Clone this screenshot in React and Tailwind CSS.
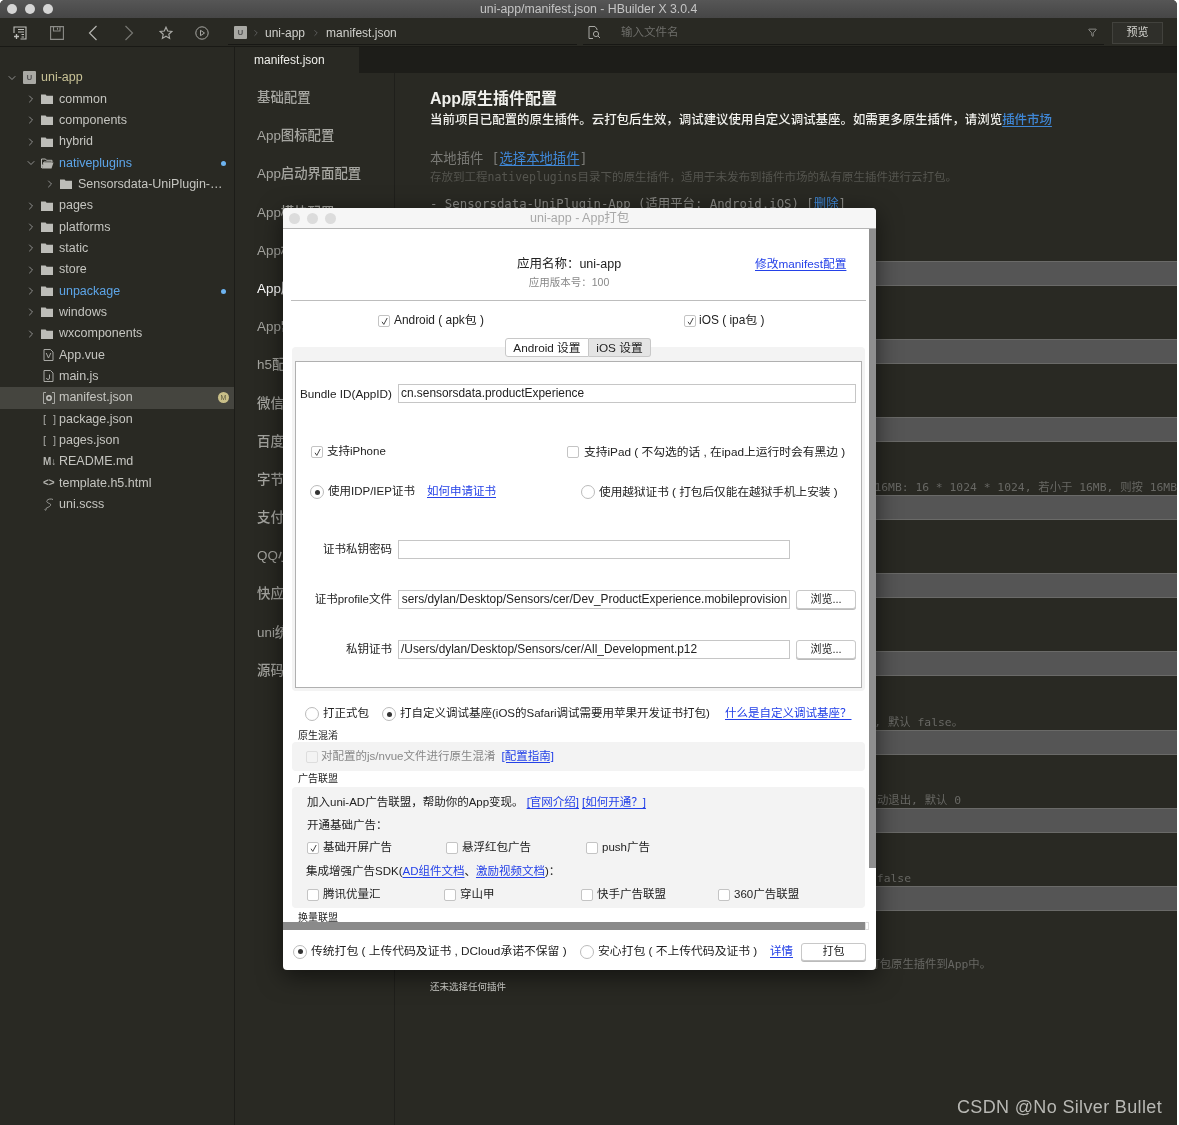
import React from "react";
import { ChevronRight, ChevronDown, Funnel } from "lucide-react";

const Folder = ({ open }) =>
  open ? (
    <svg width="13" height="11" viewBox="0 0 13 11" className="shrink-0">
      <path d="M0.5 1h4l1 1.3h5.5v1.7H3L0.5 10z" fill="none" stroke="#b5b5b0" strokeWidth="1" />
      <path d="M3 4.5h9.5L10.5 10.5H0.8z" fill="#b5b5b0" />
    </svg>
  ) : (
    <svg width="12" height="10" viewBox="0 0 12 10" className="shrink-0">
      <path d="M0 0.5h4.6l1 1.3H12V10H0z" fill="#bdbdb8" />
    </svg>
  );

const Chev = ({ open }) =>
  open ? (
    <ChevronDown size={12} strokeWidth={1.6} className="text-[#aaa] shrink-0" />
  ) : (
    <ChevronRight size={12} strokeWidth={1.6} className="text-[#aaa] shrink-0" />
  );

const FileGlyph = ({ kind }) => {
  if (kind === "vue" || kind === "js")
    return (
      <svg width="11" height="12" viewBox="0 0 11 12" className="shrink-0">
        <path d="M1 0.5h6.5L10 3v8.5H1z" fill="none" stroke="#a8a8a4" />
        {kind === "vue" ? (
          <path d="M3.2 4l2.3 5 2.3-5" fill="none" stroke="#a8a8a4" />
        ) : (
          <path d="M6.5 4.5v3.5a1.5 1.5 0 0 1-3 0" fill="none" stroke="#a8a8a4" />
        )}
      </svg>
    );
  if (kind === "manifest")
    return (
      <svg width="12" height="12" viewBox="0 0 12 12" className="shrink-0">
        <path d="M3 .5H.5v11H3M9 .5h2.5v11H9" fill="none" stroke="#a8a8a4" />
        <circle cx="6" cy="6" r="2.2" fill="none" stroke="#c8c8c4" strokeWidth="1.4" />
      </svg>
    );
  if (kind === "json")
    return <span className="text-[11px] leading-none text-[#a8a8a4] tracking-[2px] w-[12px] whitespace-nowrap shrink-0">[ ]</span>;
  if (kind === "md")
    return <span className="text-[10px] leading-none font-bold text-[#b5b5b0] w-[12px] whitespace-nowrap shrink-0">M↓</span>;
  if (kind === "html")
    return <span className="text-[10px] leading-none font-bold text-[#b5b5b0] w-[12px] whitespace-nowrap shrink-0">&lt;&gt;</span>;
  return (
    <svg width="12" height="13" viewBox="0 0 12 13" className="shrink-0">
      <path d="M10 1.5C8 .5 5 1 4 2.5s1 2.5 2.5 3S8 7.5 6.5 8.5 3 10 2 11.5c-.5.8 1 1 1.5 0" fill="none" stroke="#9a9a96" strokeWidth="1" />
    </svg>
  );
};

const tree = [
  { n: "common" }, { n: "components" }, { n: "hybrid" },
  { n: "nativeplugins", open: true, blue: true, dot: true },
  { n: "Sensorsdata-UniPlugin-…", deep: true },
  { n: "pages" }, { n: "platforms" }, { n: "static" }, { n: "store" },
  { n: "unpackage", blue: true, dot: true },
  { n: "windows" }, { n: "wxcomponents" },
  { n: "App.vue", f: "vue" }, { n: "main.js", f: "js" },
  { n: "manifest.json", f: "manifest", active: true },
  { n: "package.json", f: "json" }, { n: "pages.json", f: "json" },
  { n: "README.md", f: "md" }, { n: "template.h5.html", f: "html" }, { n: "uni.scss", f: "scss" },
];

const navItems = ["基础配置", "App图标配置", "App启动界面配置", "App模块配置", "App权限配置", "App原生插件配置", "App常用其它设置", "h5配置", "微信小程序配置", "百度小程序配置", "字节跳动小程序配置", "支付宝小程序配置", "QQ小程序配置", "快应用配置", "uni统计配置", "源码视图"];

const stripes = [
  { t: "" },
  { t: "" },
  { t: "若大于 16MB: 16 * 1024 * 1024, 若小于 16MB, 则按 16MB", c: "pr-0" },
  { t: "" },
  { t: "" },
  { t: "是否支持分片上传与断点续传, 默认 false。", c: "pr-[214px]" },
  { t: "多少秒后无操作自动退出, 默认 0", c: "pr-[216px]" },
  { t: "是否开启调试日志, 默认 false", c: "pr-[266px]" },
];

const UIcon = () => (
  <span className="w-[13px] h-[13px] bg-[#a9a9a4] rounded-[1px] flex items-center justify-center text-[8px] leading-none text-[#555] font-bold shrink-0">U</span>
);

const Check = ({ on, dim }) => (
  <span className={`w-[12px] h-[12px] rounded-[2px] border flex items-center justify-center shrink-0 ${dim ? "border-[#ddd] bg-[#f3f3f3]" : "border-[#c4c4c4] bg-white"}`}>
    {on && (
      <svg width="9" height="9" viewBox="0 0 9 9">
        <path d="M2 4.8l1.8 2.6L7.2 1" fill="none" stroke="#444" strokeWidth="1" />
      </svg>
    )}
  </span>
);

const Radio = ({ on }) => (
  <span className="w-[14px] h-[14px] rounded-full border border-[#bbb] bg-white flex items-center justify-center shrink-0">
    {on && <span className="w-[5px] h-[5px] rounded-full bg-[#333]" />}
  </span>
);

const A = ({ children, className = "" }) => <span className={`text-[#2441e8] underline underline-offset-2 ${className}`}>{children}</span>;

const Input = ({ w, children }) => (
  <div className={`h-[19px] border border-[#c6c6c6] bg-white flex items-center px-[2px] overflow-hidden whitespace-nowrap text-[11.9px] text-[#222] ${w}`}>{children}</div>
);

const Btn = ({ children, w }) => (
  <div className={`h-[19px] rounded-[3px] border border-[#c8c8c8] bg-white shadow-[0_1px_0_#bbb] flex items-center justify-center text-[11px] text-[#222] ${w}`}>{children}</div>
);

export default function App() {
  return (
    <div className="relative w-[1179px] h-[1125px] overflow-hidden bg-white font-['Liberation_Sans','Noto_Sans_CJK_SC',sans-serif] blur-[0.4px]">
      <div className="w-[1177px] h-[1125px] flex flex-col bg-[#292923] rounded-t-[5px] overflow-hidden">
        {/* title bar */}
        <div className="h-[18px] shrink-0 bg-gradient-to-b from-[#565656] to-[#464646] flex items-center relative">
          <div className="flex gap-[8px] pl-[7px]">
            <span className="w-[10px] h-[10px] rounded-full bg-[#d5d5d5]" />
            <span className="w-[10px] h-[10px] rounded-full bg-[#d5d5d5]" />
            <span className="w-[10px] h-[10px] rounded-full bg-[#d5d5d5]" />
          </div>
          <span className="ml-[427px] text-[12.3px] text-[#c4c4c4] whitespace-nowrap">uni-app/manifest.json - HBuilder X 3.0.4</span>
        </div>

        {/* toolbar */}
        <div className="h-[29px] shrink-0 border-b border-[#191915] flex items-center text-[#a8a8a4]">
          <div className="w-[228px] flex items-center pl-[2px] pt-[1px] shrink-0">
            <div className="w-[36.4px] flex justify-center">
              <svg width="14" height="14" viewBox="0 0 14 14" fill="none" stroke="#c0c0bc" strokeWidth="1.1">
                <path d="M1 7V1h12v12H7.5" />
                <path d="M5 3.5h6M5 6h6M8.5 8.5H11M8.5 11H11" />
                <path d="M3.5 8v5M1 10.5h5" strokeWidth="1.3" />
              </svg>
            </div>
            <div className="w-[36.4px] flex justify-center">
              <svg width="14" height="14" viewBox="0 0 14 14" fill="none" stroke="#8c8c88" strokeWidth="1.1">
                <path d="M.6.6h12.8v12.8H.6zM3.5.6v4.4h6.5V.6M7.5 1.8v2" />
              </svg>
            </div>
            <div className="w-[36.4px] flex justify-center">
              <svg width="10" height="16" viewBox="0 0 10 16" fill="none" stroke="#b5b5b0" strokeWidth="1.2"><path d="M8.5 1L1.5 8l7 7" /></svg>
            </div>
            <div className="w-[36.4px] flex justify-center">
              <svg width="10" height="16" viewBox="0 0 10 16" fill="none" stroke="#777772" strokeWidth="1.2"><path d="M1.5 1l7 7-7 7" /></svg>
            </div>
            <div className="w-[36.4px] flex justify-center">
              <svg width="14" height="14" viewBox="0 0 14 14" fill="none" stroke="#a8a8a4" strokeWidth="1.2"><path d="M7 1.2l1.7 3.8 4.1.5-3 2.8.8 4.1L7 10.3l-3.6 2.1.8-4.1-3-2.8 4.1-.5z" /></svg>
            </div>
            <div className="w-[36.4px] flex justify-center">
              <svg width="14" height="14" viewBox="0 0 14 14" fill="none" stroke="#a8a8a4" strokeWidth="1"><circle cx="7" cy="7" r="6.2" /><path d="M5.5 4.3L9.5 7l-4 2.7z" /></svg>
            </div>
          </div>
          <div className="w-[349px] h-[25px] border-b border-[#171714] flex items-center pl-[6px] pt-[2px] shrink-0 text-[12px] text-[#cfcfcb]">
            <UIcon />
            <ChevronRight size={10} className="ml-[4px] text-[#666]" />
            <span className="ml-[4px]">uni-app</span>
            <ChevronRight size={10} className="ml-[6px] text-[#666]" />
            <span className="ml-[5px]">manifest.json</span>
          </div>
          <div className="ml-[6px] w-[521px] h-[25px] border-b border-[#171714] flex items-center pl-[5px] pt-[2px] shrink-0">
            <svg width="13" height="13" viewBox="0 0 13 13" fill="none" stroke="#a8a8a4">
              <path d="M7 .5H1v12h4M7 .5L9 3v1" />
              <circle cx="8" cy="8" r="2.6" />
              <path d="M10 10l2 2" />
            </svg>
            <span className="ml-[20px] text-[11.5px] text-[#6e6e6a]">输入文件名</span>
            <Funnel size={9} className="ml-auto mr-[7px] text-[#a8a8a4]" />
          </div>
          <div className="ml-[8px] mt-[1px] w-[51px] h-[22px] border border-[#42423d] bg-[#2f2f2a] flex items-center justify-center text-[11px] text-[#d5d5d0]">预览</div>
        </div>

        <div className="flex-1 flex min-h-0">
          {/* sidebar */}
          <div className="w-[235px] shrink-0 border-r border-[#1c1c18] pt-[20px] text-[12.5px] text-[#c5c5c0]">
            <div className="h-[21.35px] flex items-center pl-[6px]">
              <Chev open />
              <span className="ml-[5px]"><UIcon /></span>
              <span className="ml-[5px] text-[#c8c296]">uni-app</span>
            </div>
            {tree.map((r) => (
              <div key={r.n} className={`h-[21.35px] flex items-center whitespace-nowrap ${r.deep ? "pl-[44px]" : "pl-[25px]"} ${r.active ? "bg-[#45453f]" : ""}`}>
                {r.f ? (
                  <span className="w-[12px] shrink-0" />
                ) : (
                  <Chev open={r.open} />
                )}
                <span className={`w-[13px] flex items-center shrink-0 ${r.f ? "ml-[6px]" : "ml-[4px]"}`}>
                  {r.f ? <FileGlyph kind={r.f} /> : <Folder open={r.open} />}
                </span>
                <span className={`${r.f ? "ml-[3px]" : "ml-[5px]"} ${r.blue ? "text-[#5da5e8]" : ""}`}>{r.n}</span>
                {r.dot && <span className="ml-auto mr-[8px] w-[5px] h-[5px] rounded-full bg-[#6db3f0]" />}
                {r.active && <span className="ml-auto mr-[5px] w-[11px] h-[11px] rounded-full bg-[#c9bf88] flex items-center justify-center text-[7px] text-[#5c5840]">M</span>}
              </div>
            ))}
          </div>

          <div className="flex-1 flex flex-col min-w-0">
            {/* tab bar */}
            <div className="h-[26px] shrink-0 flex bg-[#1d1d19]">
              <div className="w-[124px] bg-[#292923] pl-[19px] flex items-center text-[12px] text-[#eeeeea]">manifest.json</div>
            </div>

            <div className="flex-1 flex min-h-0">
              {/* settings nav */}
              <div className="w-[160px] shrink-0 border-r border-[#1f1f1b] pt-[6px] pl-[22px] text-[13.4px] font-medium text-[#a5a5a0]">
                {navItems.map((n) => (
                  <div key={n} className={`h-[38.2px] flex items-center whitespace-nowrap ${n === "App原生插件配置" ? "text-white" : ""}`}>{n}</div>
                ))}
              </div>

              {/* main */}
              <div className="flex-1 min-w-0 pl-[35px] pt-[15px] overflow-hidden">
                <div className="h-[23px] leading-[22px] text-[16px] font-bold text-[#f0f0ec]">App原生插件配置</div>
                <div className="h-[18px] leading-[18px] text-[12.45px] font-medium text-[#f0f0ec] whitespace-nowrap">当前项目已配置的原生插件。云打包后生效，调试建议使用自定义调试基座。如需更多原生插件，请浏览<span className="text-[#3f87d6] underline underline-offset-2">插件市场</span></div>
                <div className="mt-[21px] h-[18px] leading-[18px] text-[13.35px] text-[#7a7a76] whitespace-nowrap font-['DejaVu_Sans_Mono','Noto_Sans_CJK_SC',monospace]">本地插件 [<span className="text-[#3f87d6] underline underline-offset-2">选择本地插件</span>]</div>
                <div className="h-[18px] leading-[18px] text-[11.5px] text-[#55554f] whitespace-nowrap font-['DejaVu_Sans_Mono','Noto_Sans_CJK_SC',monospace]">存放到工程nativeplugins目录下的原生插件，适用于未发布到插件市场的私有原生插件进行云打包。</div>
                <div className="mt-[9px] h-[18px] leading-[18px] text-[12.35px] text-[#8a8a86] whitespace-nowrap font-['DejaVu_Sans_Mono','Noto_Sans_CJK_SC',monospace]">- Sensorsdata-UniPlugin-App (适用平台: Android,iOS) [<span className="text-[#3f87d6]">删除</span>]</div>
                <div className="mt-[48px] font-['DejaVu_Sans_Mono','Noto_Sans_CJK_SC',monospace] text-[11.35px] text-[#686864]">
                  <div className="h-[25px] bg-[#555555] border-y border-[#6a6a68]" />
                  {stripes.map((s, i) => (
                    <div key={i}>
                      <div className={`h-[53.1px] flex items-end justify-end whitespace-nowrap overflow-hidden leading-[16px] ${s.c || ""}`}>{s.t}</div>
                      <div className="h-[25px] bg-[#555555] border-y border-[#6a6a68]" />
                    </div>
                  ))}
                  <div className="pt-[45px] h-[61px] leading-[16px] text-right pr-[186px] whitespace-nowrap">将本地原生插件打包原生插件到App中。</div>
                  <div className="mt-[8px] h-[14px] leading-[14px] text-[9.5px] text-[#d5d5d0] font-['Liberation_Sans','Noto_Sans_CJK_SC',sans-serif]">还未选择任何插件</div>
                </div>
              </div>
            </div>
          </div>
        </div>
      </div>

      {/* dialog */}
      <div className="absolute left-[283px] top-[208px] w-[593px] h-[762px] bg-white rounded-[4px] shadow-[0_6px_24px_rgba(0,0,0,0.55)] flex flex-col overflow-hidden text-[11.5px] text-[#222]">
        <div className="h-[21px] shrink-0 bg-[#f6f6f6] border-b border-[#b5b5b5] flex items-center">
          <div className="flex gap-[7px] pl-[6px]">
            <span className="w-[11px] h-[11px] rounded-full bg-[#dcdcdc]" />
            <span className="w-[11px] h-[11px] rounded-full bg-[#dcdcdc]" />
            <span className="w-[11px] h-[11px] rounded-full bg-[#dcdcdc]" />
          </div>
          <span className="ml-[194px] text-[12.5px] text-[#a8a8a8] whitespace-nowrap">uni-app - App打包</span>
        </div>

        <div className="h-[701px] shrink-0 flex">
          <div className="w-[586px] shrink-0 flex flex-col">
            <div className="h-[693px] shrink-0 overflow-hidden pl-[9px] pr-[4px]">
              {/* header */}
              <div className="h-[72px] border-b border-[#bdbdbd] flex pt-[27px] -mx-[1px]">
                <div className="ml-[224px] w-[108px] flex flex-col items-center shrink-0">
                  <div className="h-[17px] leading-[17px] text-[12.5px] whitespace-nowrap">应用名称：uni-app</div>
                  <div className="h-[18px] leading-[18px] text-[10.5px] text-[#888] whitespace-nowrap">应用版本号：100</div>
                </div>
                <A className="ml-[132px] -mt-[1px] h-[18px] leading-[18px] text-[11.75px] whitespace-nowrap">修改manifest配置</A>
              </div>

              <div className="mt-[11px] h-[18px] flex items-center text-[11.9px]">
                <span className="ml-[86px]"><Check on /></span>
                <span className="ml-[4px] whitespace-nowrap w-[290px]">Android ( apk包 )</span>
                <Check on />
                <span className="ml-[3px] whitespace-nowrap">iOS ( ipa包 )</span>
              </div>

              {/* tabs */}
              <div className="mt-[8px] h-[19px] flex relative z-10 pl-[213px] -mb-[10px] text-[11.75px]">
                <div className="w-[84px] h-[19px] border border-[#c8c8c8] rounded-l-[3px] bg-white flex items-center justify-center whitespace-nowrap">Android 设置</div>
                <div className="w-[62px] h-[19px] border-y border-r border-[#c8c8c8] rounded-r-[3px] bg-[#e4e4e4] flex items-center justify-center whitespace-nowrap">iOS 设置</div>
              </div>

              {/* group */}
              <div className="h-[344px] bg-[#f3f3f3] rounded-[4px] pt-[14px] px-[3px]">
                <div className="h-[327px] border border-[#b0b0b0] bg-white pt-[22px]">
                  <div className="flex items-center">
                    <div className="w-[96px] text-right whitespace-nowrap text-[11.75px]">Bundle ID(AppID)</div>
                    <div className="ml-[6px]"><Input w="w-[458px]">cn.sensorsdata.productExperience</Input></div>
                  </div>
                  <div className="mt-[40px] h-[18px] flex items-center">
                    <span className="ml-[15px]"><Check on /></span>
                    <span className="ml-[4px] whitespace-nowrap w-[240px]">支持iPhone</span>
                    <Check />
                    <span className="ml-[5px] whitespace-nowrap text-[11.75px]">支持iPad ( 不勾选的话 , 在ipad上运行时会有黑边 )</span>
                  </div>
                  <div className="mt-[22px] h-[18px] flex items-center">
                    <span className="ml-[14px]"><Radio on /></span>
                    <span className="ml-[4px] whitespace-nowrap w-[99px]">使用IDP/IEP证书</span>
                    <A className="whitespace-nowrap w-[154px]">如何申请证书</A>
                    <Radio />
                    <span className="ml-[4px] whitespace-nowrap text-[11.65px]">使用越狱证书 ( 打包后仅能在越狱手机上安装 )</span>
                  </div>
                  <div className="mt-[39px] flex items-center">
                    <div className="w-[96px] text-right whitespace-nowrap">证书私钥密码</div>
                    <div className="ml-[6px]"><Input w="w-[392px]" /></div>
                  </div>
                  <div className="mt-[31px] flex items-center">
                    <div className="w-[96px] text-right whitespace-nowrap">证书profile文件</div>
                    <div className="ml-[6px]"><Input w="w-[392px] justify-end">sers/dylan/Desktop/Sensors/cer/Dev_ProductExperience.mobileprovision</Input></div>
                    <div className="ml-[6px]"><Btn w="w-[60px]">浏览...</Btn></div>
                  </div>
                  <div className="mt-[31px] flex items-center">
                    <div className="w-[96px] text-right whitespace-nowrap">私钥证书</div>
                    <div className="ml-[6px]"><Input w="w-[392px]">/Users/dylan/Desktop/Sensors/cer/All_Development.p12</Input></div>
                    <div className="ml-[6px]"><Btn w="w-[60px]">浏览...</Btn></div>
                  </div>
                </div>
              </div>

              <div className="mt-[14px] h-[18px] flex items-center whitespace-nowrap">
                <span className="ml-[13px]"><Radio /></span>
                <span className="ml-[4px] w-[59px]">打正式包</span>
                <Radio on />
                <span className="ml-[4px] w-[325px]">打自定义调试基座(iOS的Safari调试需要用苹果开发证书打包)</span>
                <A>什么是自定义调试基座？</A>
              </div>
              <div className="mt-[6px] h-[13px] leading-[13px] pl-[6px] text-[10px]">原生混淆</div>
              <div className="h-[29px] bg-[#f3f3f3] rounded-[4px] flex items-center text-[#888] whitespace-nowrap">
                <span className="ml-[14px]"><Check dim /></span>
                <span className="ml-[3px]">对配置的js/nvue文件进行原生混淆</span>
                <A className="ml-[6px]">[配置指南]</A>
              </div>
              <div className="mt-[1px] h-[14px] leading-[14px] pl-[6px] text-[10px]">广告联盟</div>
              <div className="mt-[1px] h-[121px] bg-[#f3f3f3] rounded-[4px] pt-[7px] pl-[15px] whitespace-nowrap">
                <div className="h-[18px] flex items-center">加入uni-AD广告联盟，帮助你的App变现。<A className="ml-[3px]">[官网介绍]</A><A className="ml-[3px]">[如何开通？]</A></div>
                <div className="mt-[5px] h-[18px] flex items-center">开通基础广告：</div>
                <div className="mt-[4px] h-[18px] flex items-center">
                  <Check on /><span className="ml-[4px] w-[123px]">基础开屏广告</span>
                  <Check /><span className="ml-[4px] w-[124px]">悬浮红包广告</span>
                  <Check /><span className="ml-[4px]">push广告</span>
                </div>
                <div className="mt-[6px] h-[18px] flex items-center -ml-[1px]">集成增强广告SDK(<A>AD组件文档</A>、<A>激励视频文档</A>)：</div>
                <div className="mt-[5px] h-[18px] flex items-center">
                  <Check /><span className="ml-[4px] w-[121px]">腾讯优量汇</span>
                  <Check /><span className="ml-[4px] w-[121px]">穿山甲</span>
                  <Check /><span className="ml-[4px] w-[121px]">快手广告联盟</span>
                  <Check /><span className="ml-[4px]">360广告联盟</span>
                </div>
              </div>
              <div className="mt-[3px] h-[14px] leading-[14px] pl-[6px] text-[10px]">换量联盟</div>
            </div>
            <div className="h-[8px] shrink-0 flex">
              <div className="w-[582px] bg-[#8a8a8a]" />
              <div className="w-[4px] border border-[#ddd] bg-white" />
            </div>
          </div>
          <div className="w-[7px] h-[639px] bg-[#8f8f8f]" />
        </div>

        {/* footer */}
        <div className="flex-1 flex items-center pl-[10px] pt-[3px] whitespace-nowrap text-[11.8px]">
          <Radio on />
          <span className="ml-[4px] w-[269px]">传统打包 ( 上传代码及证书 , DCloud承诺不保留 )</span>
          <Radio />
          <span className="ml-[4px] w-[172px]">安心打包 ( 不上传代码及证书 )</span>
          <A className="text-[11.5px]">详情</A>
          <div className="ml-[8px]"><Btn w="w-[65px] !h-[18px]">打包</Btn></div>
        </div>
      </div>

      {/* watermark */}
      <div className="absolute right-[17px] top-[1095px] text-[18px] leading-[24px] tracking-[0.35px] text-[#b8b8b4] whitespace-nowrap">CSDN @No Silver Bullet</div>
    </div>
  );
}
